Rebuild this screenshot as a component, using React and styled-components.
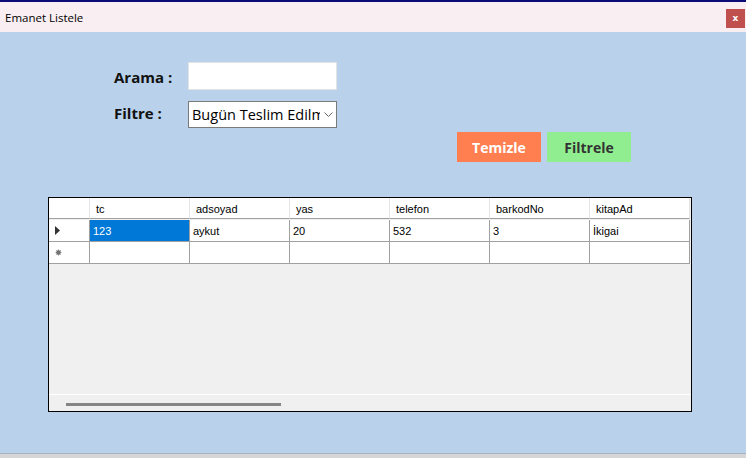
import React from 'react'
import styled, { createGlobalStyle } from 'styled-components'

const blue = '#b9d1ea'
const gridLine = '#a0a0a0'

const GlobalStyle = createGlobalStyle`
  html, body {
    margin: 0;
    padding: 0;
    overflow: hidden;
  }
  body {
    font-family: "Open Sans", "Noto Sans", sans-serif;
  }
`

const Window = styled.div`
  display: flex;
  flex-direction: column;
  width: 746px;
  height: 458px;
  border-top: 2px solid #0b0b78;
  box-sizing: border-box;
`

const TitleBar = styled.div`
  display: flex;
  align-items: center;
  justify-content: space-between;
  height: 30px;
  padding: 0 1px 0 5px;
  background: #f9eef2;
`

const Title = styled.span`
  font-size: 11.5px;
  color: #000;
`

const CloseButton = styled.div`
  display: flex;
  align-items: center;
  justify-content: center;
  width: 19px;
  height: 19px;
  margin-top: 2px;
  background: #c0504d;
  color: #fff;
  font-family: "DejaVu Sans", sans-serif;
  font-weight: bold;
  font-size: 9px;
`

const Body = styled.div`
  flex: 1;
  display: flex;
  flex-direction: column;
  padding: 30px 0 0 48px;
  background: ${blue};
`

const Form = styled.div`
  display: grid;
  grid-template-columns: 74px 149px;
  row-gap: 11px;
  align-items: center;
  margin-left: 66px;
`

const Label = styled.label`
  font-size: 15px;
  font-weight: 700;
  color: #111;
  margin-top: ${p => p.$offset || 0}px;
`

const TextBox = styled.div`
  height: 28px;
  box-sizing: border-box;
  background: #fff;
  border: 1px solid #e3e3e3;
`

const Select = styled.div`
  display: flex;
  align-items: center;
  height: 27px;
  box-sizing: border-box;
  background: #fff;
  border: 1px solid #7a7a7a;
  padding-left: 3px;
`

const SelectText = styled.span`
  flex: 1;
  overflow: hidden;
  white-space: nowrap;
  font-size: 14.5px;
  color: #000;
`

const Chevron = styled.span`
  display: flex;
  align-items: center;
  justify-content: center;
  width: 16px;
  flex-shrink: 0;
`

const Buttons = styled.div`
  display: flex;
  gap: 6px;
  margin: 4px 0 0 409px;
`

const Button = styled.div`
  display: flex;
  align-items: center;
  justify-content: center;
  width: 84px;
  height: 30px;
  background: ${p => p.$bg};
  color: ${p => p.$fg};
  font-size: 14px;
  font-weight: 700;
`

const Grid = styled.div`
  display: flex;
  flex-direction: column;
  width: 644px;
  height: 215px;
  margin-top: 35px;
  box-sizing: border-box;
  border: 1px solid #000;
  background: #f0f0f0;
  font-family: "Liberation Sans", Arial, sans-serif;
  font-size: 11px;
`

const Rows = styled.div`
  flex: 1;
  display: grid;
  grid-template-columns: 41px repeat(6, 100px);
  grid-auto-rows: 22px;
  align-content: start;
`

const HeadCell = styled.div`
  display: flex;
  align-items: center;
  height: 21px;
  padding: 1px 0 0 6px;
  box-sizing: border-box;
  background: #fff;
  border-right: 1px solid #e5e5e5;
  border-bottom: 1px solid ${gridLine};
  color: #000;
`

const RowHead = styled.div`
  display: flex;
  align-items: center;
  padding-left: 6px;
  box-sizing: border-box;
  background: #fff;
  border-right: 1px solid ${gridLine};
  border-bottom: 1px solid ${gridLine};
`

const Cell = styled.div`
  display: flex;
  align-items: center;
  padding-left: 3px;
  box-sizing: border-box;
  background: ${p => (p.$selected ? '#0078d7' : '#fff')};
  color: ${p => (p.$selected ? '#fff' : '#000')};
  border-right: 1px solid ${gridLine};
  border-bottom: 1px solid ${gridLine};
`

const ScrollArea = styled.div`
  display: flex;
  align-items: center;
  height: 16px;
  padding-left: 17px;
  border-top: 1px solid #fff;
`

const ScrollThumb = styled.div`
  width: 215px;
  height: 3px;
  margin-top: 2px;
  background: #858585;
`

const Footer = styled.div`
  height: 4px;
  border-top: 1px solid #a9b4c0;
  background: #d6d6d6;
`

const columns = ['tc', 'adsoyad', 'yas', 'telefon', 'barkodNo', 'kitapAd']
const rows = [['123', 'aykut', '20', '532', '3', 'İkigai']]

const Arrow = () => (
  <svg width="5" height="9" viewBox="0 0 5 9">
    <path d="M0 0 L5 4.5 L0 9 Z" fill="#333" />
  </svg>
)

const NewRowMark = () => (
  <svg width="7" height="7" viewBox="0 0 7 7">
    <circle cx="3.5" cy="3.5" r="2.2" fill="#555" />
    <path d="M3.5 0.5 V6.5 M0.5 3.5 H6.5 M1.3 1.3 L5.7 5.7 M5.7 1.3 L1.3 5.7" stroke="#777" strokeWidth="0.8" />
  </svg>
)

const App = () => (
  <Window>
    <GlobalStyle />
    <TitleBar>
      <Title>Emanet Listele</Title>
      <CloseButton>x</CloseButton>
    </TitleBar>
    <Body>
      <Form>
        <Label $offset={1}>Arama :</Label>
        <TextBox />
        <Label $offset={-3}>Filtre :</Label>
        <Select>
          <SelectText>Bugün Teslim Edilmeyenler</SelectText>
          <Chevron>
            <svg width="9" height="5" viewBox="0 0 9 5">
              <path d="M0.5 0.5 L4.5 4.5 L8.5 0.5" fill="none" stroke="#666" strokeWidth="1" />
            </svg>
          </Chevron>
        </Select>
      </Form>
      <Buttons>
        <Button $bg="#ff7f50" $fg="#fff">Temizle</Button>
        <Button $bg="#90ee90" $fg="#333">Filtrele</Button>
      </Buttons>
      <Grid>
        <Rows>
          <HeadCell />
          {columns.map(c => (
            <HeadCell key={c}>{c}</HeadCell>
          ))}
          {rows.map((r, i) => (
            <React.Fragment key={i}>
              <RowHead>
                <Arrow />
              </RowHead>
              {r.map((v, j) => (
                <Cell key={j} $selected={j === 0}>
                  {v}
                </Cell>
              ))}
            </React.Fragment>
          ))}
          <RowHead>
            <NewRowMark />
          </RowHead>
          {columns.map(c => (
            <Cell key={c} />
          ))}
        </Rows>
        <ScrollArea>
          <ScrollThumb />
        </ScrollArea>
      </Grid>
    </Body>
    <Footer />
  </Window>
)

export default App
